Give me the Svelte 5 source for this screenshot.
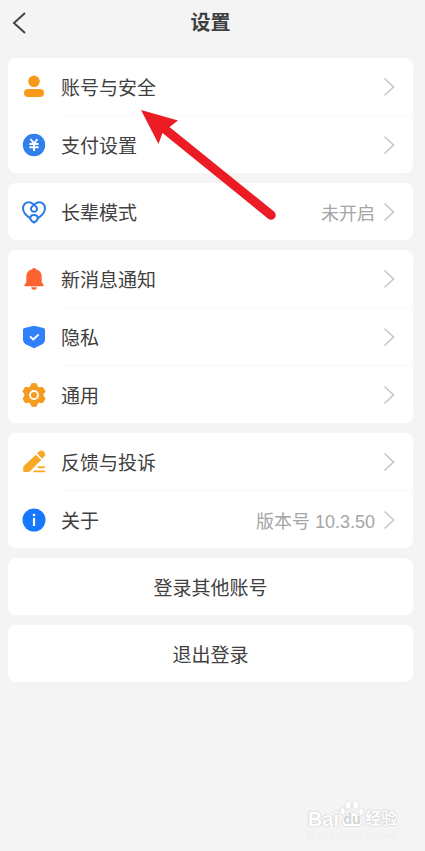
<script>
  const groups = [
    [
      { icon: 'user', label: '账号与安全' },
      { icon: 'pay', label: '支付设置' }
    ],
    [{ icon: 'heart', label: '长辈模式', value: '未开启' }],
    [
      { icon: 'bell', label: '新消息通知' },
      { icon: 'shield', label: '隐私' },
      { icon: 'gear', label: '通用' }
    ],
    [
      { icon: 'pen', label: '反馈与投诉' },
      { icon: 'info', label: '关于', value: '版本号 10.3.50' }
    ]
  ];
  const actions = ['登录其他账号', '退出登录'];
</script>

{#snippet glyph(name)}
  <svg class="icon" viewBox="0 0 24 24" aria-hidden="true">
    {#if name === 'user'}
      <circle cx="12" cy="6.3" r="5.8" fill="#f79a1c" />
      <rect x="2" y="14" width="20" height="8" rx="4" fill="#f79a1c" />
    {:else if name === 'pay'}
      <circle cx="12" cy="12" r="11.2" fill="#2f80ed" />
      <path d="M8.6 6.2l3.4 4.3 3.4-4.3M7.4 11h9.2M7.4 14.2h9.2M12 10.5v7.5" fill="none" stroke="#fff" stroke-width="2" />
    {:else if name === 'heart'}
      <g fill="none" stroke="#2b7de6" stroke-width="2">
        <path d="M8.6 18.6C4.6 16 1 12.600 1 8.300C1 4.800 3.600 2.300 6.800 2.300C9.800 2.300 11.800 4.300 14 6.600A3 3 0 1 1 10 6.600C12.200 4.300 14.200 2.300 17.200 2.300C20.400 2.300 23 4.800 23 8.300C23 12.600 19.400 16 15.400 18.600" />
        <path d="M8.300 18.300c0-2.100 1.700-3.200 3.700-3.200s3.700 1.100 3.700 3.200c0 1.700-2.300 3.500-3.700 4.200c-1.400-.7-3.700-2.500-3.700-4.200z" />
      </g>
    {:else if name === 'bell'}
      <path d="M10.300 2.200a1.800 1.800 0 0 1 3.400 0C17.700 3 19.700 6 19.700 9.500v5.700l1.800 2.600q.6 1.400-.8 1.400H3.300q-1.400 0-.8-1.400l1.800-2.600V9.500C4.300 6 6.300 3 10.300 2.200zM9 20.200h6q-.6 2.800-3 2.800t-3-2.800z" fill="#fb642f" />
    {:else if name === 'shield'}
      <path d="M12 .7l9.600 2.300q1.400.4 1.400 1.800v10.300q0 2.500-2.200 3.900L12 23.200l-8.800-4.200Q1 17.600 1 15.100V4.800q0-1.400 1.400-1.800z" fill="#2f80fa" />
      <path d="M8 11.300l3.200 3.200 5.500-5" fill="none" stroke="#fff" stroke-width="1.900" />
    {:else if name === 'gear'}
      <path d="M9.700.7h4.600l1.200 3.100 1.700 1 3.500-.5 2.400 4.200-2 2.500v2l2 2.500-2.400 4.200-3.500-.5-1.700 1-1.200 3.100H9.700l-1.200-3.100-1.700-1-3.500.5L.9 15.500l2-2.500v-2l-2-2.500 2.400-4.200 3.500.5 1.700-1z" fill="#f79b20" stroke="#f79b20" stroke-width="1" stroke-linejoin="round" />
      <circle cx="12" cy="12" r="4" fill="none" stroke="#fff" stroke-width="1.800" />
    {:else if name === 'pen'}
      <path d="M13.800 4.700l5.400 5.400L8 21.300q-.8.800-2 .8H2.200q-1 0-1-1v-3.400q0-1.200.8-2zM15 3.500l1.700-1.700a3.500 3.500 0 0 1 5.200 5.200l-1.600 1.800z" fill="#f9a825" />
      <path d="M16.500 17.200H22M12.300 21.400h10" stroke="#f9a825" stroke-width="1.900" stroke-linecap="round" />
    {:else}
      <circle cx="12" cy="12" r="11.500" fill="#1677ff" />
      <circle cx="12" cy="7.100" r="1.300" fill="#fff" />
      <path d="M12 10v8" stroke="#fff" stroke-width="2.200" />
    {/if}
  </svg>
{/snippet}

<div class="page">
  <header>
    <button class="back" aria-label="返回">
      <svg viewBox="0 0 14 24" aria-hidden="true"><path d="M13 2L2 12 13 22" /></svg>
    </button>
    <h1>设置</h1>
  </header>

  <main>
    {#each groups as group}
      <nav class="card">
        {#each group as item}
          <a class="row" href="#{item.icon}">
            {@render glyph(item.icon)}
            <span class="label">{item.label}</span>
            {#if item.value}<span class="value">{item.value}</span>{/if}
            <svg class="chevron" viewBox="0 0 12 20" aria-hidden="true"><path d="M1.500 1.500L10.500 10l-9 8.500" /></svg>
          </a>
        {/each}
      </nav>
    {/each}
    {#each actions as action}
      <button class="card action">{action}</button>
    {/each}
  </main>

  <svg class="pointer" viewBox="0 0 136 112" aria-hidden="true">
    <path d="M1 1l37 10.500-8.500 6.500L134 102.500a4.600 4.600 0 0 1-5.800 7.200L22.500 24 18.500 35z" fill="#eb1c24" />
  </svg>

  <div class="watermark">
    <div class="brand">
      <span class="bai">Bai</span>
      <span class="paw">
        <svg viewBox="0 0 28 30" aria-hidden="true">
          <g fill="#fff" stroke="#dcdcdc">
            <ellipse cx="4" cy="12" rx="3" ry="4" />
            <ellipse cx="10" cy="5.500" rx="3.300" ry="4.500" />
            <ellipse cx="18" cy="5.500" rx="3.300" ry="4.500" />
            <ellipse cx="24" cy="12.500" rx="3" ry="4" />
            <path d="M14 12.500c3.500 0 4.500 3 7 5.500s4.500 4 3.500 7.500c-1.500 4.500-7 3-10.500 3s-9 1.500-10.500-3C2.500 22 4.500 20.500 7 18s3.500-5.500 7-5.500z" />
          </g>
        </svg>
        <span class="du">du</span>
      </span>
      <span class="jy">经验</span>
    </div>
    <div class="site">jingyan.baidu.com</div>
  </div>
</div>

<style>
  :global(body) {
    background: #f4f4f4;
  }
  .page {
    position: relative;
    min-height: 100vh;
    box-sizing: border-box;
    padding: 0 12px 0 8px;
    background: #f4f4f4;
    color: #404040;
    font-family: "Liberation Sans", "Noto Sans CJK SC", sans-serif;
    font-size: 19px;
  }
  header {
    display: grid;
    grid-template-columns: 40px 1fr 40px;
    align-items: center;
    height: 46px;
    margin-bottom: 12px;
  }
  .back {
    display: flex;
    padding: 0 4px;
    border: 0;
    background: none;
  }
  .back svg {
    width: 14px;
    height: 24px;
    fill: none;
    stroke: #444;
    stroke-width: 2;
  }
  h1 {
    margin: 0;
    font-size: 20px;
    font-weight: 700;
    line-height: 24px;
    text-align: center;
  }
  main {
    display: flex;
    flex-direction: column;
    gap: 10px;
  }
  .card {
    border-radius: 8px;
    background: #fff;
  }
  .row {
    position: relative;
    display: flex;
    align-items: center;
    height: 57px;
    padding: 0 18px 0 14px;
    color: inherit;
    text-decoration: none;
  }
  .row + .row {
    margin-top: 1px;
  }
  .row + .row::before {
    content: "";
    position: absolute;
    top: -1px;
    left: 54px;
    right: 0;
    height: 1px;
    background: #f8f8f8;
  }
  .icon {
    width: 24px;
    height: 24px;
    margin-right: 15px;
  }
  .label {
    flex: 1;
  }
  .value {
    margin-right: 8px;
    color: #a5a5a5;
    font-size: 18px;
  }
  .chevron {
    width: 12px;
    height: 20px;
    fill: none;
    stroke: #c9c9c9;
    stroke-width: 1.700;
  }
  .action {
    height: 57px;
    padding: 0;
    border: 0;
    color: inherit;
    font: inherit;
  }
  .pointer {
    position: absolute;
    top: 109px;
    left: 140px;
    width: 136px;
    height: 112px;
    pointer-events: none;
  }
  .watermark {
    position: absolute;
    right: 28px;
    bottom: 10px;
    color: #fff;
    text-shadow: 0 0 1px #bbb, 0 0 2px #ccc;
  }
  .brand {
    display: flex;
    align-items: flex-end;
    height: 30px;
    line-height: 20px;
  }
  .bai {
    font-size: 20px;
    font-weight: 700;
  }
  .paw {
    position: relative;
    width: 26px;
    height: 30px;
  }
  .paw svg {
    width: 26px;
    height: 30px;
  }
  .du {
    position: absolute;
    inset: auto 0 0;
    color: #d4d4d4;
    font-size: 14px;
    font-weight: 700;
    text-align: center;
    text-shadow: none;
  }
  .jy {
    font-size: 16px;
    font-weight: 700;
  }
  .site {
    font-size: 11px;
    line-height: 12px;
    text-align: center;
    text-shadow: 0 0 1px #ccc;
  }
</style>
